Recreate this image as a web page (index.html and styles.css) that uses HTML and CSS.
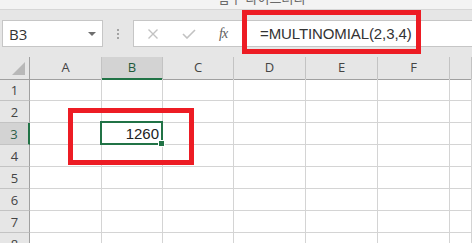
FILE: index.html
```html
<!DOCTYPE html>
<html lang="ko">

<head>
    <meta charset="UTF-8">
    <title>MULTINOMIAL</title>
    <link rel="stylesheet" href="styles.css">
</head>

<body>
<div class="window">
    <!-- bottom edge of the ribbon -->
    <div class="ribbon-tail">
        <span class="group-label">함수 라이브러리</span>
    </div>

    <!-- name box + formula bar -->
    <div class="formula-bar">
        <div class="name-box">
            <span>B3</span>
            <span class="caret"></span>
        </div>
        <div class="grip">
            <i></i><i></i><i></i>
        </div>
        <div class="formula-box">
            <div class="buttons">
                <svg class="btn" width="12" height="10" viewBox="0 0 12 10">
                    <path d="M1.5 0.5 L10.5 9.5 M10.5 0.5 L1.5 9.5" stroke="#c2c2c2" stroke-width="1.4" fill="none"/>
                </svg>
                <svg class="btn" width="14" height="10" viewBox="0 0 14 10">
                    <path d="M1 5 L5 9 L13 1" stroke="#c2c2c2" stroke-width="1.6" fill="none"/>
                </svg>
                <span class="fx">fx</span>
            </div>
            <div class="formula">=MULTINOMIAL(2,3,4)</div>
        </div>
    </div>

    <!-- worksheet grid -->
    <div class="sheet">
        <div class="corner"><span class="corner-tri"></span></div>
        <div class="col-head">A</div>
        <div class="col-head selected">B</div>
        <div class="col-head">C</div>
        <div class="col-head">D</div>
        <div class="col-head">E</div>
        <div class="col-head">F</div>
        <div class="col-head"></div>
    </div>
    <div class="sheet" id="rows"></div>

    <!-- red callouts -->
    <div class="callout formula-callout"></div>
    <div class="callout cell-callout"></div>
</div>

<script>
    // build rows 1..8, B3 holds the result
    const rows = document.getElementById('rows');
    for (let r = 1; r <= 8; r++) {
        const head = document.createElement('div');
        head.className = 'row-head' + (r === 3 ? ' selected' : '');
        head.textContent = r;
        rows.appendChild(head);
        for (let c = 0; c < 7; c++) {
            const cell = document.createElement('div');
            cell.className = 'cell';
            if (r === 3 && c === 1) {
                cell.className = 'cell active';
                cell.textContent = '1260';
            }
            rows.appendChild(cell);
        }
    }
</script>
</body>

</html>
```

FILE: styles.css
```css
* {
    box-sizing: border-box;
}

body {
    margin: 0;
    font-family: 'Liberation Sans', Arial, sans-serif;
    background-color: #fff;
    overflow: hidden;
}

.window {
    position: relative;
    width: 472px;
    height: 243px;
    overflow: hidden;
}

.ribbon-tail {
    height: 10px;
    background-color: #f3f3f3;
    border-bottom: 1px solid #d6d6d6;
    overflow: hidden;
    padding-left: 218px;
}

.group-label {
    display: block;
    margin-top: -10px;
    font-family: 'Noto Sans CJK KR', sans-serif;
    font-size: 13px;
    line-height: 16px;
    color: #6a6a6a;
}

.formula-bar {
    display: flex;
    height: 47px;
    padding-top: 10px;
    background-color: #e6e6e6;
}

.name-box {
    display: flex;
    align-items: center;
    justify-content: space-between;
    width: 101px;
    height: 27px;
    margin-left: 2px;
    padding: 0 6px 0 6px;
    background-color: #fff;
    border: 1px solid #c6c6c6;
    font-family: 'Open Sans', sans-serif;
    font-size: 15px;
    color: #333;
}

.caret {
    width: 0;
    height: 0;
    border-left: 4px solid transparent;
    border-right: 4px solid transparent;
    border-top: 4px solid #6e6e6e;
}

.grip {
    display: flex;
    flex-direction: column;
    align-items: center;
    justify-content: center;
    gap: 2px;
    width: 30px;
    height: 27px;
}

.grip i {
    width: 2px;
    height: 2px;
    background-color: #a3a3a3;
}

.formula-box {
    display: flex;
    align-items: center;
    flex: 1;
    height: 27px;
    background-color: #fff;
    border: 1px solid #c6c6c6;
    border-right: none;
}

.buttons {
    display: flex;
    align-items: center;
    padding-left: 13px;
    width: 125px;
}

.buttons .btn {
    margin-right: 23px;
}

.fx {
    font-family: 'Liberation Serif', serif;
    font-style: italic;
    font-size: 14px;
    color: #5e5e5e;
    letter-spacing: -1px;
}

.formula {
    font-size: 15px;
    color: #333;
    padding-left: 1px;
    letter-spacing: -0.1px;
}

.sheet {
    display: grid;
    grid-template-columns: 30px 72px 61px 71px 72px 72px 72px 1fr;
    grid-auto-rows: 22px;
}

.corner,
.col-head {
    height: 23px;
    background-color: #e6e6e6;
    border-bottom: 1px solid #a0a0a0;
    border-right: 1px solid #c3c3c3;
    font-family: 'Open Sans', sans-serif;
    font-size: 13px;
    color: #444;
    display: flex;
    align-items: center;
    justify-content: center;
    padding-bottom: 2px;
}

.corner {
    position: relative;
    border-right-color: #a0a0a0;
}

.corner-tri {
    position: absolute;
    right: 4px;
    bottom: 4px;
    width: 0;
    height: 0;
    border-left: 13px solid transparent;
    border-bottom: 13px solid #b8b8b8;
}

.col-head.selected {
    background-color: #d3d3d3;
    border-bottom: 2px solid #217346;
    color: #1e5a3a;
}

.row-head {
    background-color: #e6e6e6;
    border-bottom: 1px solid #c3c3c3;
    border-right: 1px solid #a0a0a0;
    font-family: 'Open Sans', sans-serif;
    font-size: 13px;
    color: #444;
    display: flex;
    align-items: center;
    justify-content: center;
}

.row-head.selected {
    background-color: #d3d3d3;
    border-right: 2px solid #217346;
    color: #2d5e4a;
}

.cell {
    position: relative;
    border-right: 1px solid #d4d4d4;
    border-bottom: 1px solid #d4d4d4;
    font-size: 15px;
    color: #222;
    text-align: right;
    padding-right: 3px;
    line-height: 21px;
}

.cell.active::after {
    content: '';
    position: absolute;
    top: -2px;
    left: -2px;
    right: -1px;
    bottom: -1px;
    border: 2px solid #217346;
}

.cell.active::before {
    content: '';
    position: absolute;
    right: -3px;
    bottom: -3px;
    width: 5px;
    height: 5px;
    background-color: #217346;
    border: 1px solid #fff;
    z-index: 2;
}

.callout {
    position: absolute;
    border: 5px solid #ed1c24;
}

.formula-callout {
    left: 242px;
    top: 10px;
    width: 179px;
    height: 44px;
}

.cell-callout {
    left: 68px;
    top: 108px;
    width: 126px;
    height: 57px;
}
```
